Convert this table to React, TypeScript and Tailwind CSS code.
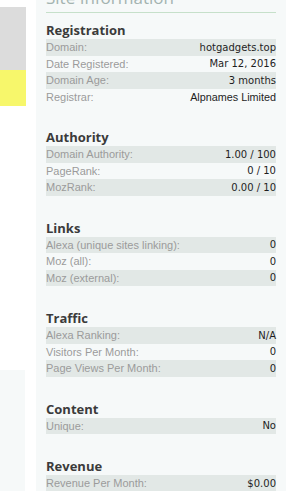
type Row = { label: string; value: string; narrow?: boolean };

const sections: { title: string; rows: Row[] }[] = [
  {
    title: 'Registration',
    rows: [
      { label: 'Domain:', value: 'hotgadgets.top' },
      { label: 'Date Registered:', value: 'Mar 12, 2016' },
      { label: 'Domain Age:', value: '3 months' },
      { label: 'Registrar:', value: 'Alpnames Limited', narrow: true },
    ],
  },
  {
    title: 'Authority',
    rows: [
      { label: 'Domain Authority:', value: '1.00 / 100' },
      { label: 'PageRank:', value: '0 / 10' },
      { label: 'MozRank:', value: '0.00 / 10' },
    ],
  },
  {
    title: 'Links',
    rows: [
      { label: 'Alexa (unique sites linking):', value: '0' },
      { label: 'Moz (all):', value: '0' },
      { label: 'Moz (external):', value: '0' },
    ],
  },
  {
    title: 'Traffic',
    rows: [
      { label: 'Alexa Ranking:', value: 'N/A' },
      { label: 'Visitors Per Month:', value: '0' },
      { label: 'Page Views Per Month:', value: '0' },
    ],
  },
  {
    title: 'Content',
    rows: [{ label: 'Unique:', value: 'No' }],
  },
  {
    title: 'Revenue',
    rows: [{ label: 'Revenue Per Month:', value: '$0.00' }],
  },
];

const Section = ({ title, rows, first }: { title: string; rows: Row[]; first?: boolean }) => {
  return (
    <div className={first ? 'mt-[8px]' : 'mt-[23px]'}>
      <h2 className="text-[13px] leading-[18px] font-bold text-[#3b3b3b] font-['Open_Sans',sans-serif]">{title}</h2>
      {rows.map((r, i) => (
        <div
          key={r.label}
          className={`flex h-[16.5px] items-center justify-between ${i % 2 === 0 ? 'bg-[#e2e8e6]' : ''}`}
        >
          <span className="text-[11px] text-[#9b9b9b] font-['Liberation_Sans',sans-serif]">{r.label}</span>
          {r.narrow ? (
            <span className="text-[10.8px] text-[#1e1e1e] font-['Liberation_Sans',sans-serif]">{r.value}</span>
          ) : (
            <span className="text-[10px] text-[#1e1e1e] font-['DejaVu_Sans',sans-serif]">{r.value}</span>
          )}
        </div>
      ))}
    </div>
  );
};

export default function App() {
  return (
    <div className="flex h-[491px] w-[294px] overflow-hidden bg-white">
      {/* left column fragments */}
      <div className="flex w-[26px] shrink-0 flex-col">
        <div className="h-[7px]" />
        <div className="h-[63px] bg-[#dcdcdc]" />
        <div className="h-[36px] bg-[#f7f76b]" />
        <div className="h-[264px]" />
        <div className="w-[25px] flex-1 bg-[#f6f9f9]" />
      </div>

      <div className="ml-[10px] w-[250px] bg-[#f6f9f9] px-[10px]">
        <div className="-mt-[12px] border-b border-[#c6e0ca] pb-[4px] text-[17px] leading-[20px] text-[#a3b3b0] font-['Open_Sans',sans-serif]">
          Site Information
        </div>
        {sections.map((s, i) => (
          <Section key={s.title} title={s.title} rows={s.rows} first={i === 0} />
        ))}
      </div>
    </div>
  );
}
